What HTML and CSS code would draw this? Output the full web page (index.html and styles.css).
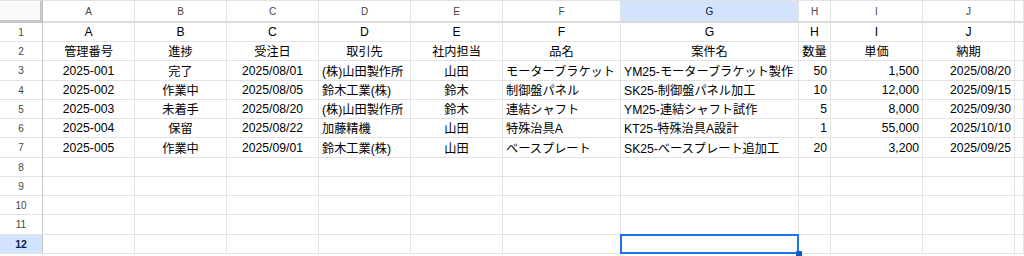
FILE: index.html
```html
<!DOCTYPE html>
<html lang="ja">
<head>
<meta charset="utf-8">
<link rel="stylesheet" href="styles.css">
</head>
<body>
<div class="sheet">
  <div class="corner"></div>
  <div class="ch">A</div><div class="ch">B</div><div class="ch">C</div><div class="ch">D</div><div class="ch">E</div><div class="ch">F</div><div class="ch sel">G</div><div class="ch">H</div><div class="ch">I</div><div class="ch">J</div><div class="ch"></div>

  <div class="rh">1</div>
  <div class="c ce">A</div><div class="c ce">B</div><div class="c ce">C</div><div class="c ce">D</div><div class="c ce">E</div><div class="c ce">F</div><div class="c ce">G</div><div class="c ce">H</div><div class="c ce">I</div><div class="c ce">J</div><div class="c"></div>

  <div class="rh">2</div>
  <div class="c ce">管理番号</div><div class="c ce">進捗</div><div class="c ce">受注日</div><div class="c ce">取引先</div><div class="c ce">社内担当</div><div class="c ce">品名</div><div class="c ce">案件名</div><div class="c ce">数量</div><div class="c ce">単価</div><div class="c ce">納期</div><div class="c"></div>

  <div class="rh">3</div>
  <div class="c ce">2025-001</div><div class="c ce">完了</div><div class="c ce">2025/08/01</div><div class="c">(株)山田製作所</div><div class="c ce">山田</div><div class="c">モーターブラケット</div><div class="c">YM25-モーターブラケット製作</div><div class="c ri">50</div><div class="c ri">1,500</div><div class="c ri">2025/08/20</div><div class="c"></div>

  <div class="rh">4</div>
  <div class="c ce">2025-002</div><div class="c ce">作業中</div><div class="c ce">2025/08/05</div><div class="c">鈴木工業(株)</div><div class="c ce">鈴木</div><div class="c">制御盤パネル</div><div class="c">SK25-制御盤パネル加工</div><div class="c ri">10</div><div class="c ri">12,000</div><div class="c ri">2025/09/15</div><div class="c"></div>

  <div class="rh">5</div>
  <div class="c ce">2025-003</div><div class="c ce">未着手</div><div class="c ce">2025/08/20</div><div class="c">(株)山田製作所</div><div class="c ce">鈴木</div><div class="c">連結シャフト</div><div class="c">YM25-連結シャフト試作</div><div class="c ri">5</div><div class="c ri">8,000</div><div class="c ri">2025/09/30</div><div class="c"></div>

  <div class="rh">6</div>
  <div class="c ce">2025-004</div><div class="c ce">保留</div><div class="c ce">2025/08/22</div><div class="c">加藤精機</div><div class="c ce">山田</div><div class="c">特殊治具A</div><div class="c">KT25-特殊治具A設計</div><div class="c ri">1</div><div class="c ri">55,000</div><div class="c ri">2025/10/10</div><div class="c"></div>

  <div class="rh">7</div>
  <div class="c ce">2025-005</div><div class="c ce">作業中</div><div class="c ce">2025/09/01</div><div class="c">鈴木工業(株)</div><div class="c ce">山田</div><div class="c">ベースプレート</div><div class="c">SK25-ベースプレート追加工</div><div class="c ri">20</div><div class="c ri">3,200</div><div class="c ri">2025/09/25</div><div class="c"></div>

  <div class="rh">8</div>
  <div class="c"></div><div class="c"></div><div class="c"></div><div class="c"></div><div class="c"></div><div class="c"></div><div class="c"></div><div class="c"></div><div class="c"></div><div class="c"></div><div class="c"></div>

  <div class="rh">9</div>
  <div class="c"></div><div class="c"></div><div class="c"></div><div class="c"></div><div class="c"></div><div class="c"></div><div class="c"></div><div class="c"></div><div class="c"></div><div class="c"></div><div class="c"></div>

  <div class="rh">10</div>
  <div class="c"></div><div class="c"></div><div class="c"></div><div class="c"></div><div class="c"></div><div class="c"></div><div class="c"></div><div class="c"></div><div class="c"></div><div class="c"></div><div class="c"></div>

  <div class="rh">11</div>
  <div class="c"></div><div class="c"></div><div class="c"></div><div class="c"></div><div class="c"></div><div class="c"></div><div class="c"></div><div class="c"></div><div class="c"></div><div class="c"></div><div class="c"></div>

  <div class="rh sel">12</div>
  <div class="c"></div><div class="c"></div><div class="c"></div><div class="c"></div><div class="c"></div><div class="c"></div><div class="c active"><span class="handle"></span></div><div class="c"></div><div class="c"></div><div class="c"></div><div class="c"></div>
</div>
</body>
</html>
```

FILE: styles.css
```css
* { box-sizing: border-box; }
html, body { margin: 0; padding: 0; background: #ffffff; }
body { overflow: hidden; }

.sheet {
  display: grid;
  grid-template-columns: 43px 92px 92px 92px 92px 92px 118px 178px 32px 92px 92px 1fr;
  grid-template-rows: 23px 19px 19px 20px 19px 19px 19px 20px 19px 19px 19px 20px 19px 1fr;
  width: 1024px;
  height: 256px;
  font-family: "Liberation Sans", Arial, "Noto Sans CJK JP", sans-serif;
  color: #000;
}

.corner {
  background: #f8f9fa;
  border-right: 3px solid #c4c7c5;
  border-bottom: 3px solid #c4c7c5;
  border-top: 1px solid #e1e3e1;
}

.ch {
  display: flex;
  align-items: center;
  justify-content: center;
  font-size: 10px;
  color: #444746;
  background: #ffffff;
  border-top: 1px solid #e1e3e1;
  border-right: 1px solid #e1e3e1;
  border-bottom: 2px solid #dadce0;
  padding-top: 1px;
}
.ch.sel { background: #d3e3fd; color: #0b1f3f; }

.rh {
  display: flex;
  align-items: center;
  justify-content: center;
  font-size: 10px;
  color: #444746;
  background: #ffffff;
  border-right: 1px solid #c4c7c5;
  border-bottom: 1px solid #e1e3e1;
}
.rh.sel { background: #d3e3fd; color: #041e49; font-weight: bold; font-size: 10.5px; }

.c {
  display: flex;
  align-items: center;
  justify-content: flex-start;
  padding: 0 3px;
  font-size: 12.2px;
  white-space: nowrap;
  border-right: 1px solid #e1e3e1;
  border-bottom: 1px solid #e1e3e1;
}
.c.ce { justify-content: center; }
.c.ri { justify-content: flex-end; }

.c.active {
  position: relative;
  z-index: 2;
}
.c.active::before {
  content: "";
  position: absolute;
  left: -1px;
  top: -1px;
  right: -1px;
  bottom: -1px;
  border: 2px solid #1a73e8;
}
.handle {
  position: absolute;
  right: -4px;
  bottom: -4px;
  width: 6px;
  height: 6px;
  background: #0b57d0;
  border-radius: 1px;
  z-index: 3;
}
```
